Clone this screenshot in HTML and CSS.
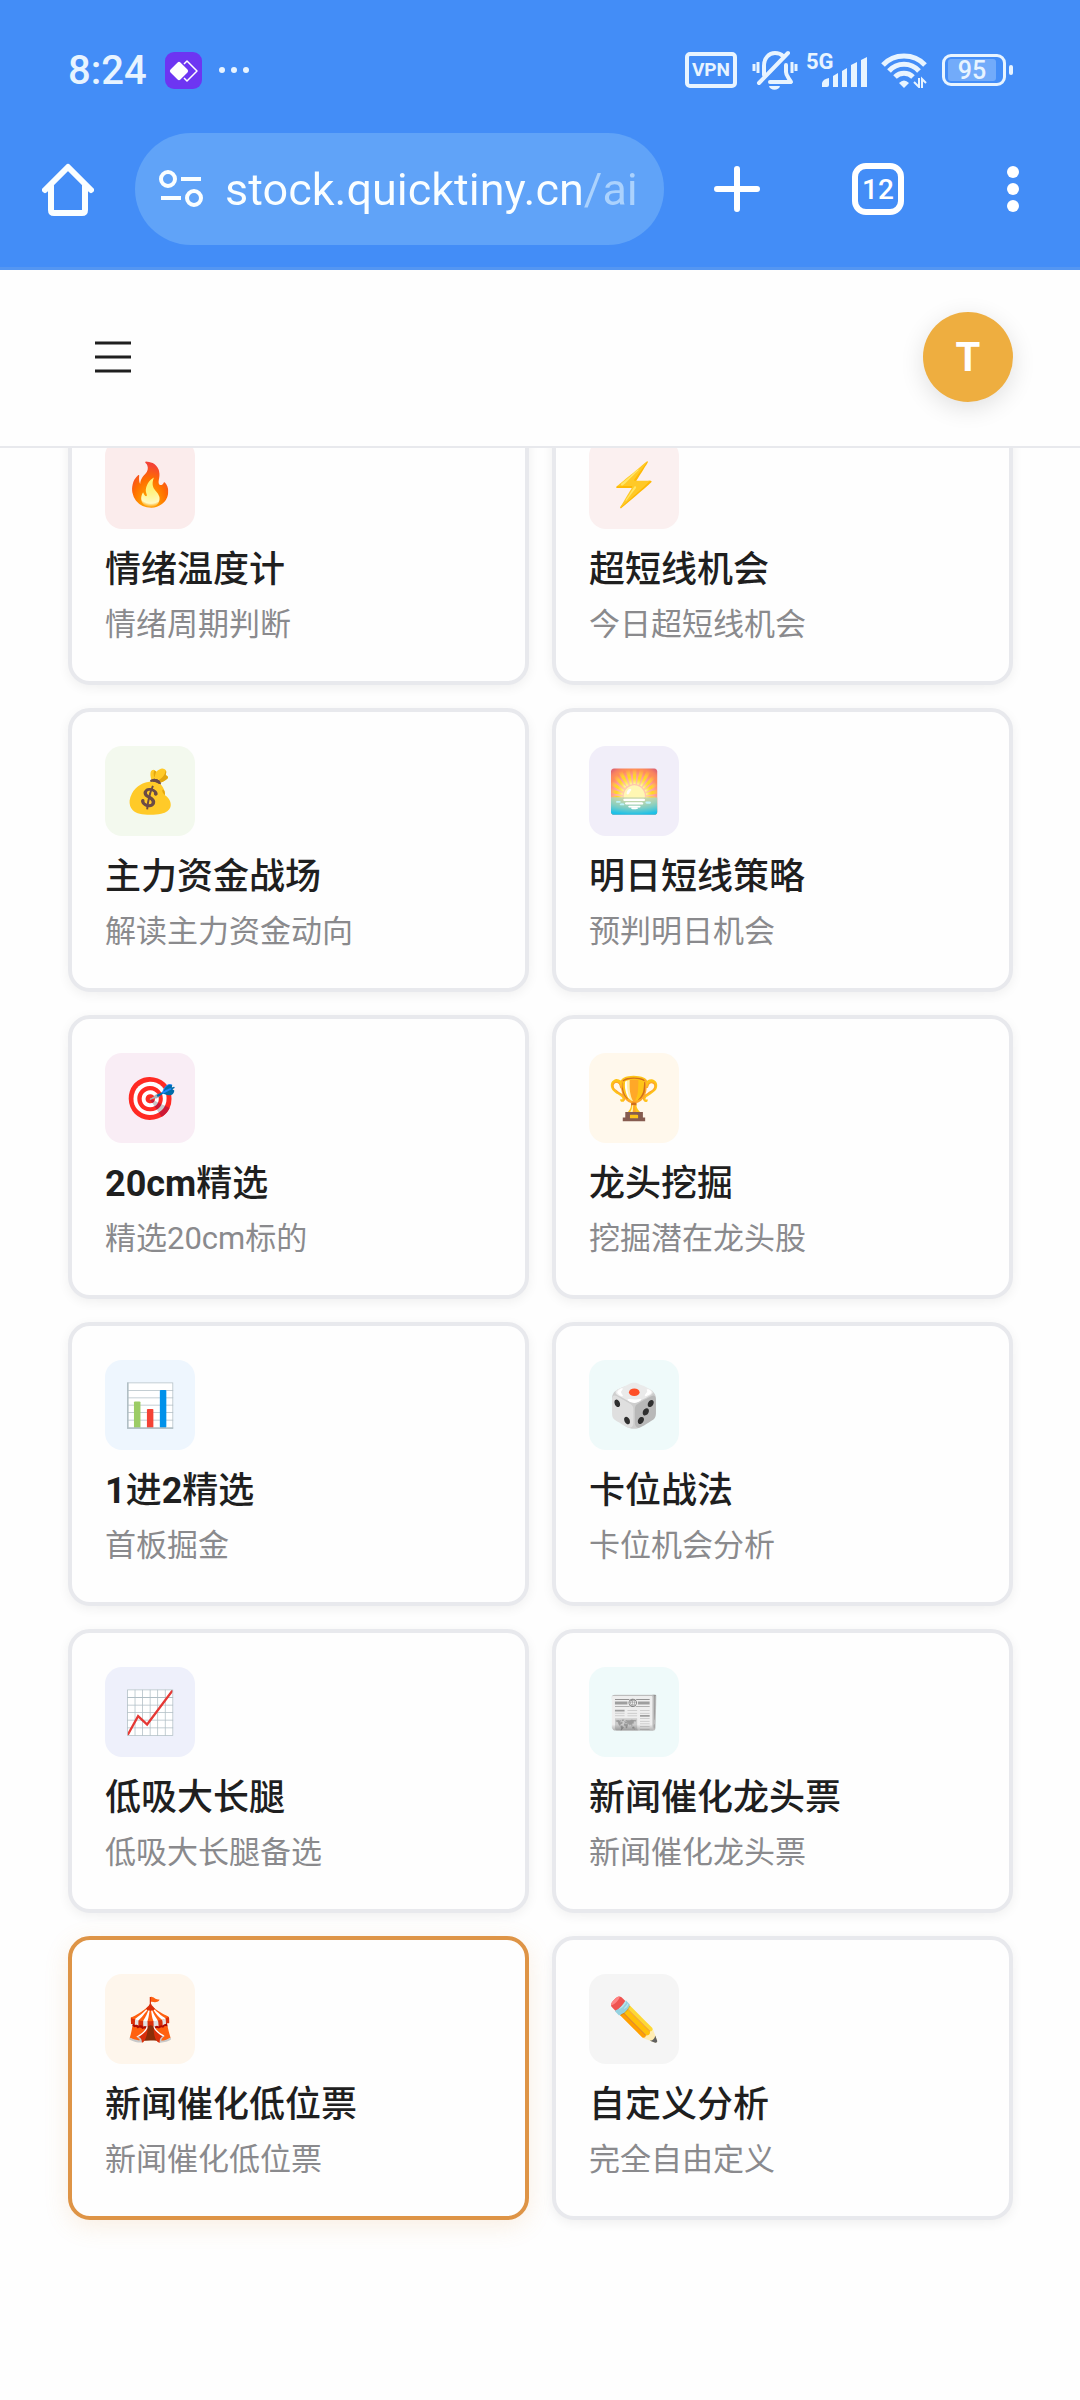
FILE: index.html
```html
<!DOCTYPE html>
<html lang="zh-CN">
  <head>
    <meta charset="utf-8" />
    <meta name="viewport" content="width=device-width" />
    <title>stock.quicktiny.cn</title>
    <link rel="stylesheet" href="styles.css">
  </head>
  <body>
    <div class="browser-bar">
      <div class="status">
        <span class="clock">8:24</span>
        <svg class="app-badge" width="37" height="37" viewBox="0 0 37 37">
          <rect width="37" height="37" rx="9" fill="#6d35f2" />
          <path d="M19 12l3-3 10 10-10 10-3-3" fill="none" stroke="#fff" stroke-width="1.5" stroke-linejoin="round" />
          <rect x="7" y="12" width="14" height="14" rx="2" fill="#fff" transform="rotate(45 14 19)" />
        </svg>
        <svg width="32" height="8" viewBox="0 0 32 8" fill="#e8f4ff">
          <circle cx="4" cy="4" r="3" />
          <circle cx="16" cy="4" r="3" />
          <circle cx="28" cy="4" r="3" />
        </svg>

        <div class="status-right">
          <span class="vpn">VPN</span>
          <svg width="46" height="40" viewBox="0 0 46 40" fill="none" stroke="#e8f4ff" stroke-linecap="round">
            <path d="M12 25V16c0-8 5-13 11-13 3 0 6 1 8 3M34 15v7c0 4 3 6 5 10H18" stroke-width="4" stroke-linejoin="round" />
            <path d="M36 3L7 33" stroke-width="4" />
            <path d="M2 14v7M6 12v11M40 12v11M44 14v7" stroke-width="3" stroke-linecap="butt" />
            <path d="M17 36h11c-1 5-10 5-11 0z" fill="#e8f4ff" stroke="none" />
          </svg>
          <div class="signal">
            <span class="signal-label">5G</span>
            <svg width="46" height="30" viewBox="0 0 46 30" fill="#e8f4ff">
              <path d="M0 30v-4q1-4 7-5v7q0 2-2 2z" />
              <path d="M11 30V19l5-3v14z" />
              <path d="M20 30V14l5-3v19z" />
              <path d="M29 30V8l6-3v25z" />
              <path d="M39 30V3l6-3v30z" />
            </svg>
          </div>
          <svg width="46" height="36" viewBox="0 0 46 36">
            <g fill="none" stroke="#e8f4ff" stroke-width="5">
              <path d="M2 13C13 1 33 1 44 13" />
              <path d="M8 19c8-9 22-9 30 0" />
              <path d="M14 25c5-5 13-5 18 0" />
            </g>
            <path d="M18 31q5-5 10 0l-5 5z" fill="#e8f4ff" />
            <path d="M38 26v9l-5-5M41 36v-9l4 4" fill="none" stroke="#e8f4ff" stroke-width="2" />
          </svg>
          <div class="battery"><span class="battery-level">95</span></div>
        </div>
      </div>

      <div class="toolbar">
        <button class="icon-btn" type="button" aria-label="主页">
          <svg width="52" height="54" viewBox="0 0 52 54" fill="none" stroke="#fafeff" stroke-width="6" stroke-linejoin="round" stroke-linecap="round">
            <path d="M3 28L26 5l23 23" />
            <path d="M9 24v24q0 3 3 3h28q3 0 3-3V24" />
          </svg>
        </button>
        <div class="address">
          <svg width="44" height="38" viewBox="0 0 44 38" fill="none" stroke="#fafeff" stroke-width="4">
            <circle cx="9" cy="9" r="7" />
            <circle cx="35" cy="28" r="7" />
            <path d="M22 9h20M2 28h20" />
          </svg>
          <input class="address-input" type="text" aria-label="网址" value="stock.quicktiny.cn/ai" />
        </div>
        <div class="actions">
          <button class="icon-btn" type="button" aria-label="新标签页">
            <svg width="46" height="46" viewBox="0 0 46 46" stroke="#fff" stroke-width="6" stroke-linecap="round">
              <path d="M23 3v40M3 23h40" />
            </svg>
          </button>
          <button class="icon-btn" type="button" aria-label="标签页">
            <span class="tab-count">12</span>
          </button>
          <button class="icon-btn" type="button" aria-label="更多">
            <svg width="12" height="48" viewBox="0 0 12 48" fill="#fff">
              <circle cx="6" cy="7" r="6" />
              <circle cx="6" cy="24" r="6" />
              <circle cx="6" cy="41" r="6" />
            </svg>
          </button>
        </div>
      </div>
    </div>

    <header class="app-header">
      <button class="icon-btn" type="button" aria-label="菜单">
        <svg width="36" height="32" viewBox="0 0 36 32" stroke="#1f1f1f" stroke-width="3">
          <path d="M0 2h36M0 16h36M0 30h36" />
        </svg>
      </button>
      <button class="avatar" type="button" aria-label="账户">T</button>
    </header>

    <main class="cards">
      <button class="card" type="button">
        <span class="icon icon-mood">🔥</span>
        <span class="title">情绪温度计</span>
        <span class="desc">情绪周期判断</span>
      </button>
      <button class="card" type="button">
        <span class="icon icon-ultra">⚡</span>
        <span class="title">超短线机会</span>
        <span class="desc">今日超短线机会</span>
      </button>
      <button class="card" type="button">
        <span class="icon icon-fund">💰</span>
        <span class="title">主力资金战场</span>
        <span class="desc">解读主力资金动向</span>
      </button>
      <button class="card" type="button">
        <span class="icon icon-tomorrow">🌅</span>
        <span class="title">明日短线策略</span>
        <span class="desc">预判明日机会</span>
      </button>
      <button class="card" type="button">
        <span class="icon icon-target">🎯</span>
        <span class="title"><b>20cm</b>精选</span>
        <span class="desc">精选20cm标的</span>
      </button>
      <button class="card" type="button">
        <span class="icon icon-leader">🏆</span>
        <span class="title">龙头挖掘</span>
        <span class="desc">挖掘潜在龙头股</span>
      </button>
      <button class="card" type="button">
        <span class="icon icon-board">📊</span>
        <span class="title"><b>1</b>进<b>2</b>精选</span>
        <span class="desc">首板掘金</span>
      </button>
      <button class="card" type="button">
        <span class="icon icon-slot">🎲</span>
        <span class="title">卡位战法</span>
        <span class="desc">卡位机会分析</span>
      </button>
      <button class="card" type="button">
        <span class="icon icon-dip">📈</span>
        <span class="title">低吸大长腿</span>
        <span class="desc">低吸大长腿备选</span>
      </button>
      <button class="card" type="button">
        <span class="icon icon-news">📰</span>
        <span class="title">新闻催化龙头票</span>
        <span class="desc">新闻催化龙头票</span>
      </button>
      <button class="card active" type="button">
        <span class="icon icon-low">🎪</span>
        <span class="title">新闻催化低位票</span>
        <span class="desc">新闻催化低位票</span>
      </button>
      <button class="card" type="button">
        <span class="icon icon-custom">✏️</span>
        <span class="title">自定义分析</span>
        <span class="desc">完全自由定义</span>
      </button>
    </main>
  </body>
</html>
```

FILE: styles.css
```css
* {
  box-sizing: border-box;
}

body {
  margin: 0;
  background: #fefefe;
  color: #1f1f1f;
  font-family: Roboto, "Noto Sans CJK SC", sans-serif;
}

button,
input {
  padding: 0;
  border: 0;
  background: none;
  color: inherit;
  font: inherit;
}

svg {
  display: block;
  flex: none;
}

.icon-btn {
  display: flex;
  align-items: center;
  justify-content: center;
}

/* browser chrome */

.browser-bar {
  position: relative;
  z-index: 2;
  height: 270px;
  padding-top: 45px;
  border-bottom: 3px solid #5496f2;
  background: #438df7;
}

.status {
  display: flex;
  align-items: center;
  height: 50px;
  padding: 0 68px;
  color: #e8f4ff;
  font-weight: 500;
}

.clock {
  font-size: 40px;
}

.app-badge {
  margin: 0 16px 0 18px;
}

.status-right {
  display: flex;
  align-items: center;
  gap: 15px;
  margin-left: auto;
}

.vpn {
  height: 36px;
  padding: 0 3px;
  border: 4px solid #e8f4ff;
  border-radius: 5px;
  font-size: 19px;
  font-weight: 700;
  line-height: 28px;
}

.signal {
  display: flex;
  position: relative;
  align-items: flex-end;
  width: 62px;
  height: 34px;
  padding-left: 16px;
  margin: 0 -2px 0 -7px;
}

.signal-label {
  position: absolute;
  top: 0;
  left: 0;
  font-size: 22px;
  font-weight: 700;
  line-height: 18px;
}

.battery {
  position: relative;
  width: 64px;
  height: 32px;
  margin-right: 6px;
  padding: 2px 3px;
  border: 3px solid #e8f4ff;
  border-radius: 9px;
}

.battery::after {
  content: "";
  position: absolute;
  top: 8px;
  right: -10px;
  width: 4px;
  height: 10px;
  border-radius: 2px;
  background: #e8f4ff;
}

.battery-level {
  display: block;
  width: 48px;
  height: 22px;
  border-radius: 3px;
  background: #72abfa;
  font-size: 25px;
  line-height: 23px;
  text-align: center;
}

.toolbar {
  display: flex;
  align-items: center;
  margin-top: 38px;
  padding-left: 42px;
}

.address {
  display: flex;
  flex: 1;
  align-items: center;
  gap: 22px;
  min-width: 0;
  height: 112px;
  margin-left: 41px;
  padding: 0 20px 0 24px;
  border-radius: 56px;
  background: #60a3f8;
}

.address-input {
  flex: 1;
  min-width: 0;
  height: 64px;
  /* the path after the host is dimmed */
  background: linear-gradient(90deg, #fafeff 357px, #abd2fd 357px);
  background-clip: text;
  color: transparent;
  font-size: 45px;
}

.actions {
  display: grid;
  grid-template-columns: 146px 136px 134px;
}

.tab-count {
  width: 52px;
  height: 52px;
  border: 6px solid #fff;
  border-radius: 14px;
  color: #fff;
  font-size: 28px;
  font-weight: 500;
  line-height: 42px;
}

/* app */

.app-header {
  display: flex;
  position: relative;
  z-index: 1;
  align-items: center;
  justify-content: space-between;
  height: 178px;
  padding: 0 67px 2px 95px;
  border-bottom: 2px solid #e8e9ed;
  background: #fefefe;
}

.avatar {
  width: 90px;
  height: 90px;
  border-radius: 50%;
  background: #eeae40;
  box-shadow: 0 6px 24px rgba(0, 0, 0, 0.12);
  color: #fff;
  font-size: 40px;
  font-weight: 700;
}

/* the list is scrolled a little under the header */
.cards {
  display: grid;
  grid-template-columns: 1fr 1fr;
  gap: 23px;
  margin-top: -47px;
  padding: 0 67px 180px 68px;
}

.card {
  display: flex;
  flex-direction: column;
  align-items: flex-start;
  padding: 34px 33px;
  border: 4px solid #e8e9ed;
  border-radius: 22px;
  background: #fefefe;
  box-shadow: 0 3px 12px rgba(0, 0, 0, 0.06);
  text-align: left;
}

.card.active {
  border-color: #de9446;
  box-shadow: 0 6px 24px rgba(222, 148, 70, 0.15);
}

.icon {
  display: flex;
  align-items: center;
  justify-content: center;
  width: 90px;
  height: 90px;
  border-radius: 17px;
  font-size: 42px;
}

.icon-mood {
  background: #fbecec;
}

.icon-ultra {
  background: #fbf0f0;
}

.icon-fund {
  background: #f3f9ee;
}

.icon-tomorrow {
  background: #f1eef9;
}

.icon-target {
  background: #f9edf5;
}

.icon-leader {
  background: #fff8ec;
}

.icon-board {
  background: #eef6fe;
}

.icon-slot,
.icon-news {
  background: #effafa;
}

.icon-dip {
  background: #eef0fb;
}

.icon-low {
  background: #fef6ec;
}

.icon-custom {
  background: #f5f5f5;
}

.title {
  margin-top: 16px;
  font-size: 36px;
  font-weight: 500;
  line-height: 50px;
}

.desc {
  margin-top: 7px;
  color: #8a8a8d;
  font-size: 31px;
  line-height: 45px;
}
```
